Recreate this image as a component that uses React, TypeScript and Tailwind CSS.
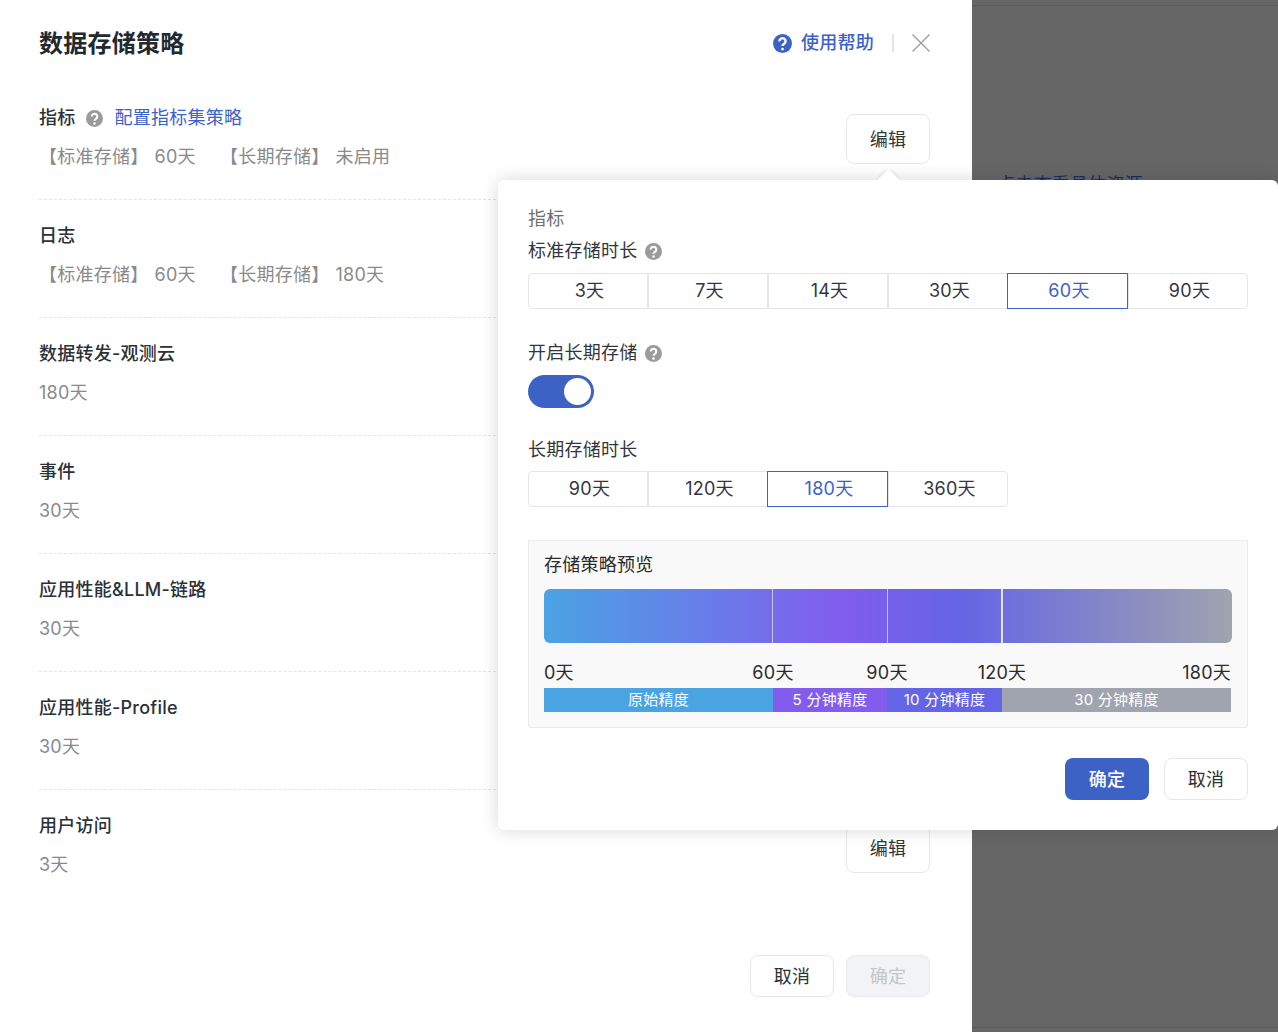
import React from "react";

const Help = ({ className }: { className: string }) => (
  <svg viewBox="0 0 16 16" className={className}>
    <circle cx="8" cy="8" r="8" fill="currentColor" />
    <path d="M5.4 6.2a2.6 2.6 0 1 1 4 2.1c-.9.6-1.4 1-1.4 1.9" fill="none" stroke="#fff" strokeWidth="2" />
    <circle cx="8" cy="12.7" r="1.2" fill="#fff" />
  </svg>
);

const rows = [
  { t: "指标", help: true, d: [["【标准存储】", "60天"], ["【长期存储】", "未启用"]] },
  { t: "日志", d: [["【标准存储】", "60天"], ["【长期存储】", "180天"]] },
  { t: "数据转发-观测云", s: "180天" },
  { t: "事件", s: "30天" },
  { t: "应用性能&LLM-链路", s: "30天" },
  { t: "应用性能-Profile", s: "30天" },
  { t: "用户访问", s: "3天" },
];

function Segments({ items, selected }: { items: string[]; selected: string }) {
  return (
    <div className="flex">
      {items.map((it, i) => {
        const on = it === selected;
        return (
          <div
            key={it}
            className={
              "flex h-9 w-[120px] items-center justify-center border pl-[3px] text-[18px] " +
              (on ? "relative z-10 -ml-px w-[121px] border-[#3d62c6] text-[#3d62c6]" : "border-[#e4e5ea] text-[#33373d]") +
              (i === 0 ? " rounded-l-[4px]" : "") +
              (i === items.length - 1 ? " rounded-r-[4px]" : "")
            }
          >
            {it}
          </div>
        );
      })}
    </div>
  );
}

export default function App() {
  return (
    <div className="relative flex h-screen w-full overflow-hidden font-['Inter','Noto_Sans_CJK_SC',sans-serif] text-[18px] leading-6 tracking-[0.25px]">
      {/* drawer */}
      <div className="flex h-full w-[972px] shrink-0 flex-col bg-white pl-[39px] pr-[42px]">
        <div className="flex h-[82px] items-start justify-between pt-[27px]">
          <div className="text-[24px] font-semibold leading-[34px] text-[#22292f]">数据存储策略</div>
          <div className="flex items-center pt-[4px]">
            <Help className="mr-[9px] size-[19px] text-[#3d62c6]" />
            <span className="font-medium text-[#3d62c6]">使用帮助</span>
            <span className="mx-[18px] h-[18px] w-[2px] bg-[#e3e4e8]" />
            <svg viewBox="0 0 18 18" className="size-[18px] text-[#9a9a9a]">
              <path d="M.5.5l17 17M17.5.5l-17 17" fill="none" stroke="currentColor" strokeWidth="1.2" />
            </svg>
          </div>
        </div>
        {rows.map((r, i) => (
          <div
            key={r.t}
            className={
              "flex h-[118px] items-start justify-between pt-[24px] " +
              (i < rows.length - 1 ? "border-b border-dashed border-[#e5e5e5]" : "")
            }
          >
            <div>
              <div className="flex items-center font-medium text-[#2a3138]">
                {r.t}
                {r.help && (
                  <>
                    <Help className="ml-[10px] size-[17px] text-[#9b9b9b]" />
                    <span className="ml-[12px] font-normal text-[#3d62c6]">配置指标集策略</span>
                  </>
                )}
              </div>
              <div className="mt-[15px] flex text-[#8a8a8a]">
                {r.s ?? null}
                {r.d?.map((p, k) => (
                  <div key={k} className={k === 0 ? "flex w-[181px]" : "flex"}>
                    <span>{p[0]}</span>
                    <span className="ml-[6px]">{p[1]}</span>
                  </div>
                ))}
              </div>
            </div>
            <button
              className={
                "h-[50px] w-[84px] rounded-lg border border-[#e6e7eb] bg-white pt-[1px] text-[#2f353b] " +
                (i === rows.length - 1 ? "mt-[9px]" : "mt-[8px]")
              }
            >
              编辑
            </button>
          </div>
        ))}
        <div className="mt-auto flex justify-end gap-3 pb-[35px]">
          <button className="h-[42px] w-[84px] rounded-lg border border-[#e6e7eb] bg-white pt-[2px] text-[#2a3138]">取消</button>
          <button className="h-[42px] w-[84px] rounded-lg border border-[#e9eaee] bg-[#f2f3f5] pt-[2px] text-[#c4c6cb]">确定</button>
        </div>
      </div>

      {/* dim backdrop */}
      <div className="flex h-full flex-1 flex-col justify-between bg-[#666666]">
        <div>
          <div className="h-[6px] border-b border-[#5c5c5c]" />
          <div className="pl-[25px] pt-[167px] text-[#1d2d63]">点击查看具体资源</div>
        </div>
        <div className="h-[5px] border-t border-[#5c5c5c]" />
      </div>

      {/* popover */}
      <div className="absolute left-[498px] top-[180px] h-[650px] w-[780px] rounded-[6px] bg-white px-[30px] pt-[27px] text-[#33373d] shadow-[0_0_18px_rgba(0,0,0,0.16)]">
        <div className="absolute -top-[11px] left-[379px] h-[11px] w-[22px] overflow-hidden">
          <div className="mx-auto mt-[3px] size-[15px] rotate-45 bg-white shadow-[0_0_5px_rgba(0,0,0,0.14)]" />
        </div>
        <div className="relative">
          <div className="text-[#6f6f6f]">指标</div>
          <div className="mt-[8px] flex items-center">
            标准存储时长
            <Help className="ml-[7px] size-[17px] text-[#9b9b9b]" />
          </div>
          <div className="mt-[10px]">
            <Segments items={["3天", "7天", "14天", "30天", "60天", "90天"]} selected="60天" />
          </div>
          <div className="mt-8 flex items-center">
            开启长期存储
            <Help className="ml-[7px] size-[17px] text-[#9b9b9b]" />
          </div>
          <div className="mt-[10px] flex h-[33px] w-[66px] items-center justify-end rounded-full bg-[#3d62c6] pr-[3px]">
            <div className="size-[27px] rounded-full bg-white" />
          </div>
          <div className="mt-[30px]">长期存储时长</div>
          <div className="mt-[9px]">
            <Segments items={["90天", "120天", "180天", "360天"]} selected="180天" />
          </div>

          {/* preview */}
          <div className="mt-[33px] h-[188px] rounded-[2px] border border-[#ebebeb] bg-[#f9f9f9] px-[15px] pt-[12px] text-[#2b2b2b]">
            <div>存储策略预览</div>
            <div className="mt-[12px] flex h-[54px] w-[688px] rounded-[6px] bg-[linear-gradient(90deg,#4aa3e3_0%,#825ded_43%,#6464e6_60%,#a0a4ae_100%)]">
              <div className="w-[229px] border-r border-white/60" />
              <div className="w-[115px] border-r border-white/60" />
              <div className="w-[115px] border-r-2 border-white/80" />
            </div>
            <div className="mt-[18px] grid w-[687px] grid-cols-[229px_114px_115px_229px]">
              <div className="flex justify-between">
                <span>0天</span>
                <span className="translate-x-1/2">60天</span>
              </div>
              <div className="flex justify-end">
                <span className="translate-x-1/2">90天</span>
              </div>
              <div className="flex justify-end">
                <span className="translate-x-1/2">120天</span>
              </div>
              <div className="flex justify-end">
                <span>180天</span>
              </div>
            </div>
            <div className="mt-[3px] grid h-6 w-[687px] grid-cols-[229px_114px_115px_229px] text-center text-[15px] leading-6 text-white">
              <div className="bg-[#4aa3e3]">原始精度</div>
              <div className="bg-[#825ded]">5 分钟精度</div>
              <div className="bg-[#6464e6]">10 分钟精度</div>
              <div className="bg-[#a0a4ae]">30 分钟精度</div>
            </div>
          </div>

          <div className="mt-[30px] flex justify-end gap-[15px]">
            <button className="h-[42px] w-[84px] rounded-lg bg-[#3d62c6] pt-[1px] font-medium text-white">确定</button>
            <button className="h-[42px] w-[84px] rounded-lg border border-[#e6e7eb] bg-white pt-[1px] text-[#2a3138]">取消</button>
          </div>
        </div>
      </div>
    </div>
  );
}
